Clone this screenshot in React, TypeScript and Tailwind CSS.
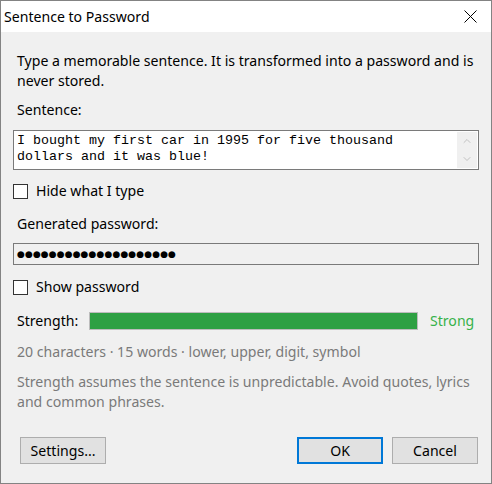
import { ChevronDown, ChevronUp } from 'lucide-react'

const ui = "font-['Noto_Sans',sans-serif]"

function Checkbox({ label }: { label: string }) {
  return (
    <label className="flex h-5 items-center gap-2">
      <span className="h-[15px] w-[15px] border border-[#333333] bg-white" />
      <span className="text-[14.1px] leading-5 text-black">{label}</span>
    </label>
  )
}

function Button({ children, primary }: { children: string; primary?: boolean }) {
  return (
    <button
      className={
        primary
          ? 'h-[27px] w-[86px] border-2 border-[#0078d7] bg-[#e1e1e1] text-[14.1px] text-black'
          : 'h-[27px] w-[86px] border border-[#adadad] bg-[#e1e1e1] text-[14.1px] text-black'
      }
    >
      {children}
    </button>
  )
}

export default function App() {
  return (
    <div className={`flex h-[484px] w-[492px] flex-col border border-[#838383] bg-[#f0f0f0] ${ui}`}>
      {/* title bar */}
      <div className="flex h-[31px] shrink-0 items-center justify-between bg-white pl-[3px] pr-[14px]">
        <span className="text-[14.1px] text-black">Sentence to Password</span>
        <svg width="13" height="13" viewBox="0 0 13 13" className="text-black">
          <path d="M0.5 0.5 L12.5 12.5 M12.5 0.5 L0.5 12.5" stroke="currentColor" strokeWidth="1" />
        </svg>
      </div>

      <div className="flex flex-1 flex-col px-3 pt-[19px]">
        <p className="pl-1 text-[14.1px] leading-5 text-black">
          Type a memorable sentence. It is transformed into a password and is never stored.
        </p>

        <div className="mt-[9px] pl-1 text-[14.1px] leading-5 text-black">Sentence:</div>

        <div className="mt-[10px] flex h-[40px] border border-[#7a7a7a] bg-white">
          <div className="flex-1 px-[3px] pt-[2px] font-['Liberation_Mono',monospace] text-[13.33px] leading-4 text-black">
            I bought my first car in 1995 for five thousand
            <br />
            dollars and it was blue!
          </div>
          <div className="my-px mr-px flex w-[20px] flex-col items-center justify-between bg-[#f0f0f0] py-[3px] text-[#c2c2c2]">
            <ChevronUp size={12} strokeWidth={2} />
            <ChevronDown size={12} strokeWidth={2} />
          </div>
        </div>

        <div className="mt-[11px]">
          <Checkbox label="Hide what I type" />
        </div>

        <div className="mt-[13px] pl-1 text-[14.1px] leading-5 text-black">Generated password:</div>

        <div className="mt-[9px] flex h-[22px] items-center border border-[#7a7a7a] bg-[#f0f0f0] px-[3px]">
          <span className="font-['DejaVu_Sans',sans-serif] text-[9px] leading-none tracking-[0.1px] text-black">
            ●●●●●●●●●●●●●●●●●●●●
          </span>
        </div>

        <div className="mt-[12px]">
          <Checkbox label="Show password" />
        </div>

        <div className="mt-[14px] flex h-5 items-center pl-1">
          <span className="w-[72px] text-[14.1px] leading-5 text-black">Strength:</span>
          <div className="h-[18px] w-[329px] border border-[#bcbcbc] bg-[#e6e6e6]">
            <div className="h-full bg-[#2ea043]" style={{ width: '100%' }} />
          </div>
          <span className="ml-3 text-[14.1px] leading-5 text-[#36b24a]">Strong</span>
        </div>

        <div className="mt-[11px] pl-1 text-[14.1px] leading-5 text-[#7a7a7a]">
          20 characters · 15 words · lower, upper, digit, symbol
        </div>

        <p className="mt-[10px] pl-1 text-[14.1px] leading-5 text-[#7a7a7a]">
          Strength assumes the sentence is unpredictable. Avoid quotes, lyrics and common phrases.
        </p>

        <div className="mt-[25px] flex items-center pl-[7px] pr-px">
          <Button>Settings...</Button>
          <div className="flex-1" />
          <Button primary>OK</Button>
          <div className="w-[9px]" />
          <Button>Cancel</Button>
        </div>
      </div>
    </div>
  )
}
